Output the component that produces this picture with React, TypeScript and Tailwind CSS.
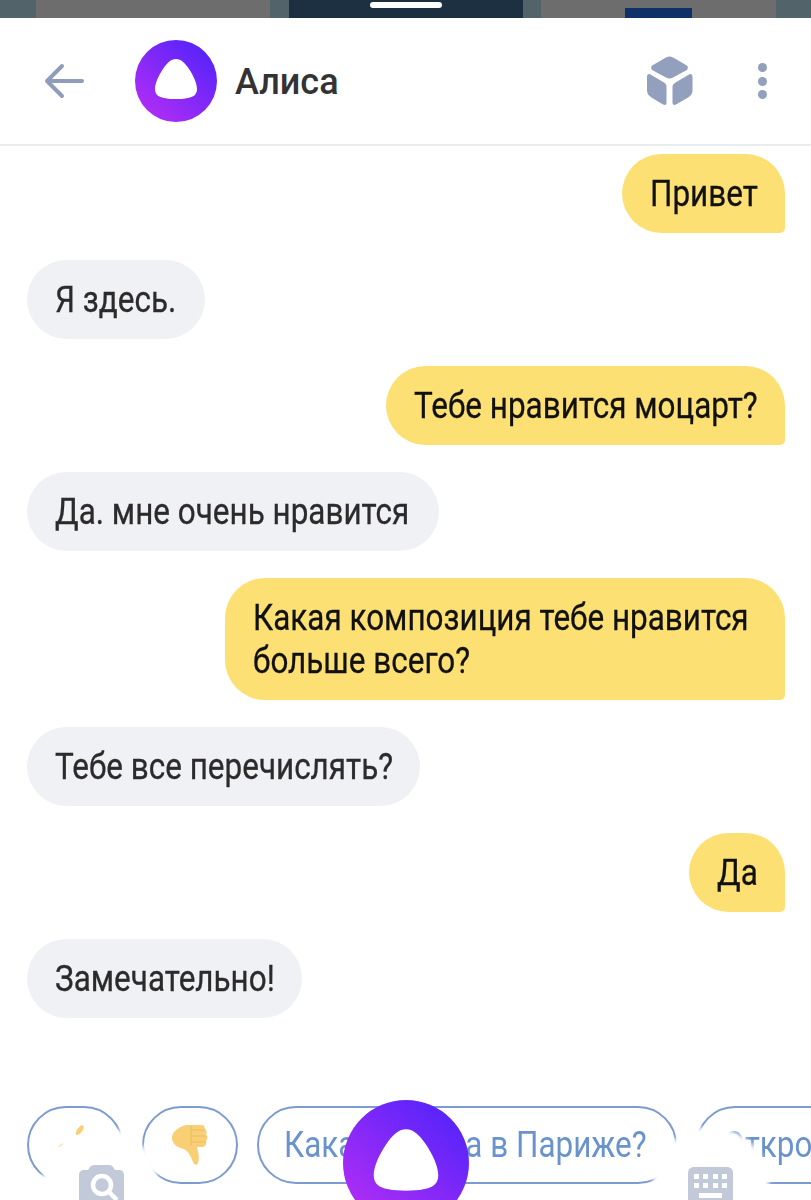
import React from "react";

const Orb = ({ cls, id }: { cls: string; id: string }) => (
  <svg viewBox="0 0 82 82" className={cls}>
    <defs>
      <linearGradient id={id} x1="0.85" y1="0.15" x2="0.2" y2="0.9">
        <stop offset="0" stopColor="#5a24fa" />
        <stop offset="1" stopColor="#ac2df5" />
      </linearGradient>
    </defs>
    <circle cx="41" cy="41" r="41" fill={`url(#${id})`} />
    <path d="M41 19C36 19 32 23 28 29C24 35 20 43 20 49C20 55 24 57 29 58C33 59 37 59 41 59C45 59 49 59 53 58C58 57 62 55 62 49C62 43 58 35 54 29C50 23 46 19 41 19Z" fill="#fff" />
  </svg>
);

const Bubble = ({ me, w, children }: { me?: boolean; w: string; children: React.ReactNode }) => (
  <div
    className={`${w} rounded-[40px] py-[18px] pl-[27.5px] pr-7 text-[37px] leading-[43px] [-webkit-text-stroke:0.3px] ${
      me ? "self-end rounded-br-[5px] bg-[#fde073] text-[#111111]" : "self-start bg-[#f0f1f5] text-[#2b2b2b]"
    }`}
  >
    <div className="origin-top-left scale-x-[0.85] whitespace-nowrap">{children}</div>
  </div>
);

const Pill = ({ w, children }: { w: string; children?: React.ReactNode }) => (
  <div className={`${w} flex h-[78px] shrink-0 items-center rounded-[39px] border-2 border-[#7c9bd0] pl-[25px] pr-[26px] text-[37px] text-[#6a93ce]`}>
    <div className="origin-left scale-x-[0.85] whitespace-nowrap">{children}</div>
  </div>
);

export default function App() {
  return (
    <div className="relative h-[1200px] w-[811px] overflow-hidden bg-white font-['Roboto',sans-serif]">
      <div className="flex h-[18px] w-full">
        <div className="w-[36px] bg-[#52646a]" />
        <div className="w-[234px] bg-[#6d6d6d]" />
        <div className="w-[19px] bg-[#52646a]" />
        <div className="w-[234px] bg-[#1d3042]" />
        <div className="w-[18px] bg-[#52646a]" />
        <div className="w-[235px] bg-[#6d6d6d]" />
        <div className="flex-1 bg-[#52646a]" />
      </div>
      <div className="absolute left-[370px] top-[2px] h-[6px] w-[72px] rounded-full bg-white" />
      <div className="absolute left-[625px] top-[8px] h-[10px] w-[67px] bg-[#0e3268]" />

      <div className="absolute inset-x-0 bottom-0 top-[18px] rounded-t-[24px] bg-white">
        <header className="flex h-[128px] items-center border-b-2 border-[#e9ebf0] pl-[44px] pr-[44px]">
          <svg viewBox="0 0 40 36" className="h-[36px] w-[40px]" fill="none" stroke="#8f9dba" strokeWidth="4" strokeLinecap="round" strokeLinejoin="round">
            <path d="M38 18H3M18 3L3 18L18 33" />
          </svg>
          <Orb id="a" cls="ml-[51px] h-[82px] w-[82px]" />
          <span className="ml-[18px] mt-[2px] text-[36px] font-medium text-[#333333]">Алиса</span>
          <svg viewBox="0 0 47 50" className="ml-auto h-[50px] w-[47px]" fill="#929fbd">
            <path d="M20 1.500C22.500 .3 24.500 .3 27 1.500L40 9C42.500 10.500 42.500 13 40 14.500L27 21.500C24.500 22.800 22.500 22.800 20 21.500L7 14.500C4.500 13 4.500 10.500 7 9Z" />
            <path d="M1 21C1 18.500 2.500 17.500 4.500 18.500L18 26.500C20 27.800 20.500 29 20.500 31V46.500C20.500 49 19 49.500 17 48.500L5.500 41.500C2.500 39.700 1 37.500 1 34.500Z" />
            <path d="M46.500 21C46.500 18.500 45 17.500 43 18.500L29.500 26.500C27.500 27.800 26.500 29 26.500 31V46.500C26.500 49 28 49.500 30 48.500L42 41.500C45 39.700 46.500 37.500 46.500 34.500Z" />
          </svg>
          <div className="ml-[65px] flex flex-col gap-[4.5px]">
            <div className="h-[9px] w-[9px] rounded-full bg-[#929fbd]" />
            <div className="h-[9px] w-[9px] rounded-full bg-[#929fbd]" />
            <div className="h-[9px] w-[9px] rounded-full bg-[#929fbd]" />
          </div>
        </header>

        <main className="flex flex-col gap-[27px] pl-[27px] pr-[26px] pt-[8px]">
          <Bubble me w="w-[163px]">Привет</Bubble>
          <Bubble w="w-[178px]">Я здесь.</Bubble>
          <Bubble me w="w-[399px]">Тебе нравится моцарт?</Bubble>
          <Bubble w="w-[412px]">Да. мне очень нравится</Bubble>
          <Bubble me w="w-[560px]">Какая композиция тебе нравится<br />больше всего?</Bubble>
          <Bubble w="w-[393px]">Тебе все перечислять?</Bubble>
          <Bubble me w="w-[96px]">Да</Bubble>
          <Bubble w="w-[275px]">Замечательно!</Bubble>
        </main>

        <div className="absolute left-[27px] top-[1088px] flex gap-[19px]">
          <Pill w="w-[96px]" />
          <Pill w="w-[96px]" />
          <Pill w="w-[420px]">Какая погода в Париже?</Pill>
          <Pill w="w-[200px]">Откро</Pill>
        </div>
      </div>

      {/* white halos of the bottom bar, over the suggestion pills */}
      <div className="absolute left-[42px] top-[1127px] h-[130px] w-[116px] rounded-full bg-white blur-[2px]" />
      <div className="absolute left-[653px] top-[1127px] h-[130px] w-[116px] rounded-full bg-white blur-[2px]" />

      <svg viewBox="0 0 36 42" className="absolute left-[172px] top-[1124px] h-[42px] w-[36px]">
        <path d="M14 1H30C32 1 33 3 33 5C35 6 35 9 34 11C36 12 36 15 34 17C35 19 34 22 31 23H25C26 28 28 33 26 39C25 42 22 41 21 38C19 33 17 28 12 25C6 24 0 20 0 14C0 8 6 3 14 1Z" fill="#f9cf76" />
        <path d="M19 2V22M20 6H33M20 12H34M20 18H34" stroke="#eebb63" strokeWidth="1.200" fill="none" />
      </svg>
      <svg viewBox="0 0 30 26" className="absolute left-[56px] top-[1124px] h-[26px] w-[30px]" fill="#f9cf76">
        <path d="M26 1C28 1 28 4 27 6C25 9 23 11 20 11C19 8 22 3 26 1Z" />
        <path d="M2 23L6 19L7 20L4 23Z" opacity="0.6" />
      </svg>

      <svg viewBox="0 0 45 35" className="absolute left-[79px] top-[1165px] h-[35px] w-[45px]">
        <path d="M5 5H9L11 2C12 .7 13 0 15 0H30C32 0 33 .7 34 2L36 5H40C43 5 45 7 45 10V35H0V10C0 7 2 5 5 5Z" fill="#c2cad9" />
        <circle cx="23" cy="20" r="9" fill="none" stroke="#fff" strokeWidth="4.500" />
        <path d="M29.500 26.500L38 35" stroke="#fff" strokeWidth="4.500" />
      </svg>
      <svg viewBox="0 0 45 33" className="absolute left-[688px] top-[1167px] h-[33px] w-[45px]">
        <path d="M6 0H39C42.500 0 45 2.500 45 6V33H0V6C0 2.500 2.500 0 6 0Z" fill="#c2cad9" />
        <g fill="#fff">
          <rect x="6" y="7" width="5" height="5" /><rect x="15" y="7" width="5" height="5" /><rect x="25" y="7" width="5" height="5" /><rect x="34" y="7" width="5" height="5" />
          <rect x="6" y="16" width="5" height="5" /><rect x="15" y="16" width="5" height="5" /><rect x="25" y="16" width="5" height="5" /><rect x="34" y="16" width="5" height="5" />
          <rect x="11" y="26" width="23" height="5" />
        </g>
      </svg>
      <Orb id="b" cls="absolute left-[343px] top-[1100px] h-[126px] w-[126px]" />
    </div>
  );
}
